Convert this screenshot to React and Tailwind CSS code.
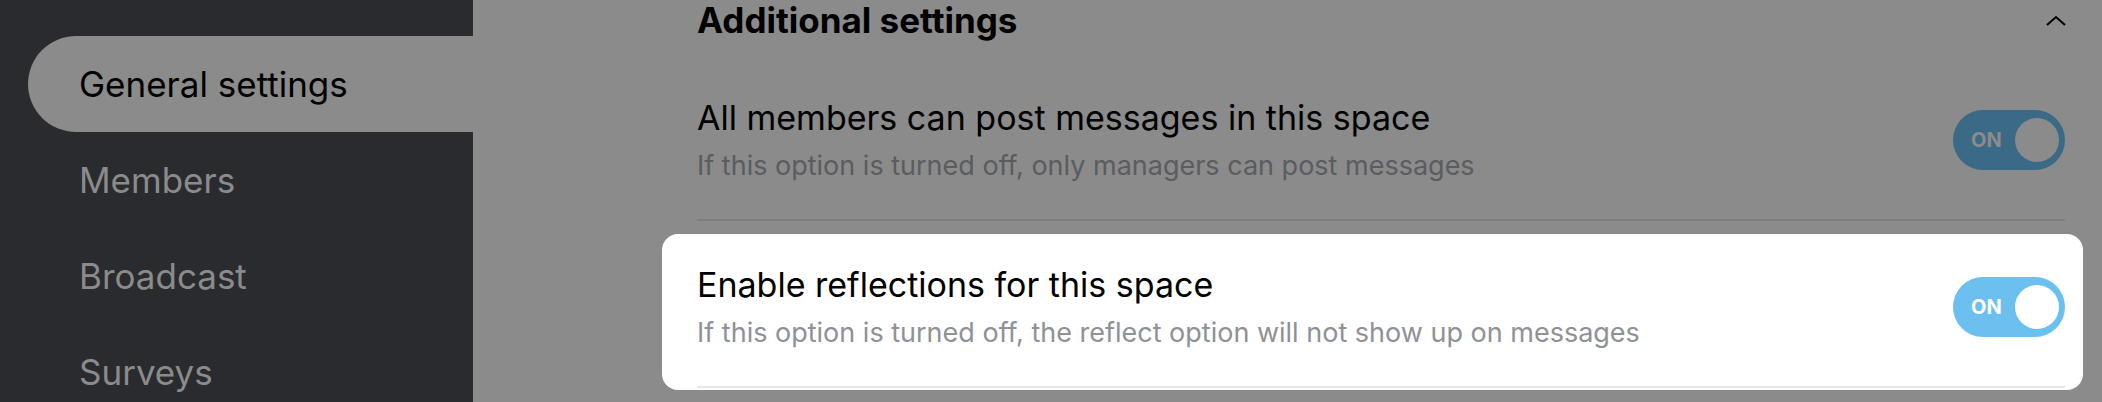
const navItems = ['General settings', 'Members', 'Broadcast', 'Surveys'];

function Toggle({ dimmed }) {
  return (
    <div
      className={
        'relative w-[112px] h-[60px] rounded-full flex items-center shrink-0 ' +
        (dimmed ? 'bg-[#3a6a86]' : 'bg-[#6bc0f0]')
      }
    >
      <span
        className={
          'pl-[18px] text-[20px] font-bold leading-none ' +
          (dimmed ? 'text-[#8b8b8b]' : 'text-white')
        }
      >
        ON
      </span>
      <div
        className={
          'absolute right-[6px] top-[8px] w-[44px] h-[44px] rounded-full ' +
          (dimmed ? 'bg-[#8b8b8b]' : 'bg-white')
        }
      />
    </div>
  );
}

function SettingRow({ title, subtitle, dimmed, divider }) {
  return (
    <div className={'flex items-center justify-between pt-[44px] pb-[37px] border-b-2 ' + divider}>
      <div>
        <div className="text-[34px] leading-[40px] text-black">{title}</div>
        <div
          className={
            'mt-[12px] text-[27px] leading-[32px] ' + (dimmed ? 'text-[#5a5c60]' : 'text-[#8e9196]')
          }
        >
          {subtitle}
        </div>
      </div>
      <Toggle dimmed={dimmed} />
    </div>
  );
}

export default function App() {
  return (
    <div
      className="w-full h-[402px] flex bg-[#8b8b8b] overflow-hidden"
      style={{ fontFamily: 'Inter, "Noto Sans", sans-serif' }}
    >
      {/* sidebar */}
      <div className="w-[473px] shrink-0 bg-[#292b2e] pt-[36px] pl-[28px]">
        {navItems.map((item, i) => (
          <div
            key={item}
            className={
              'h-[96px] flex items-center pl-[51px] text-[35px] ' +
              (i === 0 ? 'bg-[#8b8b8b] rounded-l-full text-black' : 'text-[#8b8b8b]')
            }
          >
            {item}
          </div>
        ))}
      </div>

      {/* main */}
      <div className="flex-1 pl-[224px] pr-[37px]">
        <div className="h-[40px] flex items-center justify-between">
          <div className="text-[35px] font-bold text-black">Additional settings</div>
          <svg width="20" height="11" viewBox="0 0 20 11" className="mr-[-1px]">
            <path d="M1 10 L10 2 L19 10" fill="none" stroke="black" strokeWidth="2" />
          </svg>
        </div>

        <div className="mt-[14px]">
          <SettingRow
            title="All members can post messages in this space"
            subtitle="If this option is turned off, only managers can post messages"
            dimmed
            divider="border-[#7d7e80]"
          />

          <div className="relative">
            {/* spotlight */}
            <div className="absolute top-[13px] bottom-[-2px] left-[-35px] right-[-18px] rounded-[16px] bg-white" />
            <div className="relative">
              <SettingRow
                title="Enable reflections for this space"
                subtitle="If this option is turned off, the reflect option will not show up on messages"
                divider="border-[#e6e7eb]"
              />
            </div>
          </div>
        </div>
      </div>
    </div>
  );
}
